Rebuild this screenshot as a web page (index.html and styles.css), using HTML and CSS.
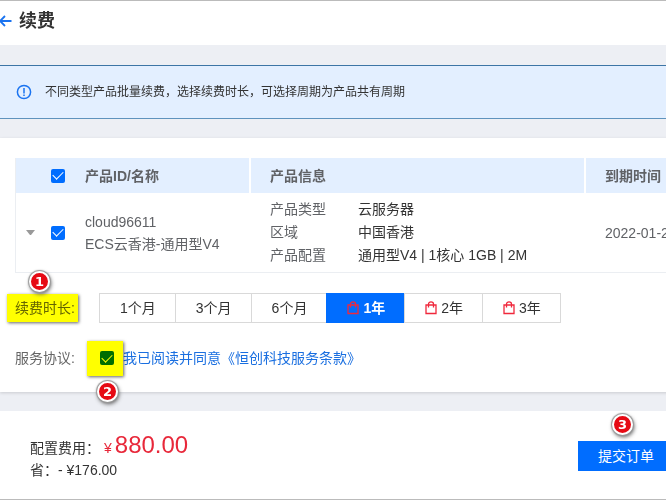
FILE: index.html
```
<!DOCTYPE html>
<html lang="zh-CN">
<head>
    <meta charset="UTF-8">
    <meta name="viewport" content="width=device-width, initial-scale=1">
    <title>续费</title>
    <link rel="stylesheet" href="styles.css">
</head>
<body>
<svg class="sprite" aria-hidden="true">
    <symbol id="bag" viewBox="0 0 12 14">
        <path d="M1 4h10v8.5H1zM3.5 6.5V3a2.5 2.2 0 0 1 5 0v3.5" fill="none" stroke="currentColor" stroke-width="1.3"/>
    </symbol>
</svg>
<div class="page">
    <header class="header">
        <a class="back" href="#" aria-label="返回">
            <svg width="14" height="12" viewBox="0 0 14 12"><path d="M13.5 6H2M7 1L2 6L7 11" fill="none" stroke="currentColor" stroke-width="1.8"/></svg>
        </a>
        <h1>续费</h1>
    </header>

    <div class="notice">
        <svg width="16" height="16" viewBox="0 0 16 16"><circle cx="8" cy="8" r="6.6" fill="none" stroke="currentColor" stroke-width="1.5"/><path d="M8 4v5.5M8 10.5v1.5" stroke="currentColor" stroke-width="1.5"/></svg>
        <span>不同类型产品批量续费，选择续费时长，可选择周期为产品共有周期</span>
    </div>

    <main class="card">
        <table class="products">
            <colgroup>
                <col class="col-name">
                <col class="col-info">
                <col>
            </colgroup>
            <thead>
                <tr>
                    <th>
                        <div class="product">
                            <span class="arrow"></span>
                            <input type="checkbox" aria-label="全选" checked>
                            <span>产品ID/名称</span>
                        </div>
                    </th>
                    <th>产品信息</th>
                    <th>到期时间</th>
                </tr>
            </thead>
            <tbody>
                <tr>
                    <td>
                        <div class="product">
                            <span class="arrow arrow-down"></span>
                            <input type="checkbox" id="cloud96611" checked>
                            <label for="cloud96611">cloud96611<br>ECS云香港-通用型V4</label>
                        </div>
                    </td>
                    <td>
                        <dl class="info">
                            <dt>产品类型</dt><dd>云服务器</dd>
                            <dt>区域</dt><dd>中国香港</dd>
                            <dt>产品配置</dt><dd>通用型V4 | 1核心 1GB | 2M</dd>
                        </dl>
                    </td>
                    <td>2022-01-2</td>
                </tr>
            </tbody>
        </table>

        <div class="row">
            <div class="row-label marked">
                <span id="period">续费时长:</span>
                <span class="mark mark-label"></span>
                <b class="badge badge-top">1</b>
            </div>
            <div class="periods" role="group" aria-labelledby="period">
                <button type="button">1个月</button>
                <button type="button">3个月</button>
                <button type="button">6个月</button>
                <button type="button" class="active"><svg><use href="#bag"/></svg>1年</button>
                <button type="button"><svg><use href="#bag"/></svg>2年</button>
                <button type="button"><svg><use href="#bag"/></svg>3年</button>
            </div>
        </div>

        <div class="row">
            <div class="row-label">服务协议:</div>
            <div class="agree marked">
                <input type="checkbox" id="agree" checked>
                <span class="mark mark-check"></span>
                <b class="badge badge-bottom">2</b>
            </div>
            <label class="terms" for="agree">我已阅读并同意<a href="#">《恒创科技服务条款》</a></label>
        </div>
    </main>

    <footer class="footer">
        <div class="cost">
            <p class="total">配置费用：<span class="yen">¥</span><strong>880.00</strong></p>
            <p>省：- ¥176.00</p>
        </div>
        <div class="submit marked">
            <button type="button">提交订单</button>
            <b class="badge badge-submit">3</b>
        </div>
    </footer>
</div>
</body>
</html>
```

FILE: styles.css
```
* {
  box-sizing: border-box;
}
body {
  margin: 0;
  overflow: hidden;
  background: #edeff4;
  color: #333;
  font: 14px/22px "Liberation Sans", "Noto Sans CJK SC", sans-serif;
}
h1, p, dl, dd {
  margin: 0;
}
a {
  color: #1a6fe0;
  text-decoration: none;
}
button {
  font: inherit;
  color: inherit;
  cursor: pointer;
}
.sprite {
  position: absolute;
  width: 0;
  height: 0;
}

/* the content is a little wider than the window */
.page {
  display: flex;
  flex-direction: column;
  width: calc(100% + 8px);
  min-height: 100vh;
  border-top: 1px solid #bbb;
  border-bottom: 1px solid #bbb;
}

.header {
  display: flex;
  align-items: center;
  gap: 7px;
  height: 44px;
  padding-bottom: 4px;
  margin-left: -2px;
  background: #fff;
}
.back {
  display: flex;
  color: #1a73f0;
}
h1 {
  font-size: 18px;
  line-height: 24px;
}

.notice {
  display: flex;
  align-items: center;
  gap: 13px;
  height: 54px;
  margin: 20px 0 19px;
  padding-left: 16px;
  border-top: 1px solid #3d75a5;
  border-bottom: 1px solid #5f93bd;
  background: #e3efff;
  font-size: 12px;
}
.notice svg {
  color: #1a73f0;
}

.card {
  padding: 20px 0 19px 15px;
  background: #fff;
  box-shadow: 0 1px 3px rgba(0, 0, 0, 0.15);
}

.products {
  width: 100%;
  table-layout: fixed;
  border-collapse: separate;
  border-spacing: 0;
  border-left: 1px solid #ebeef2;
  color: #606266;
}
.col-name {
  width: 233px;
}
.col-info {
  width: 335px;
}
.products th {
  height: 35px;
  padding: 0 0 0 19px;
  border-left: 2px solid #fff;
  background: #e3efff;
  text-align: left;
  white-space: nowrap;
}
.products td {
  height: 80px;
  padding: 0 0 0 21px;
  border-bottom: 1px solid #ebeef2;
  white-space: nowrap;
}
.products th:first-child,
.products td:first-child {
  padding-left: 10px;
  border-left: 0;
}
.product {
  display: flex;
  align-items: center;
}
.arrow {
  width: 9px;
}
.arrow-down {
  border: 4px solid transparent;
  border-top: 5px solid #999;
  border-bottom: 0;
}
.info {
  display: grid;
  grid-template-columns: 88px 1fr;
  line-height: 23px;
}
.info dd {
  color: #333;
}

input[type="checkbox"] {
  appearance: none;
  display: grid;
  place-content: center;
  flex: none;
  width: 14px;
  height: 14px;
  margin: 0;
  border-radius: 2px;
  background: #006dff;
}
input[type="checkbox"]:checked::before {
  content: "";
  width: 9px;
  height: 5px;
  margin-bottom: 3px;
  border: solid #fff;
  border-width: 0 0 1px 1px;
  transform: rotate(-45deg);
}
.product input[type="checkbox"] {
  margin: 0 20px 0 16px;
}

.row {
  display: flex;
  align-items: center;
  height: 30px;
  margin-top: 20px;
  white-space: nowrap;
}
.row-label {
  width: 84px;
  color: #666;
}
.periods {
  display: flex;
}
.periods button {
  display: flex;
  align-items: center;
  gap: 4px;
  height: 30px;
  padding: 0 19px 0 20px;
  border: 1px solid #d9d9d9;
  background: #fff;
}
.periods button + button {
  margin-left: -1px;
}
.periods .active {
  border-color: #006dff;
  background: #006dff;
  color: #fff;
  font-weight: bold;
}
.periods svg {
  width: 12px;
  height: 14px;
  color: #f0283c;
}
.agree {
  display: flex;
  padding: 0 9px 0 1px;
}
.terms {
  color: #1a6fe0;
}

/* highlighter blocks and step numbers */
.marked {
  position: relative;
}
.mark {
  position: absolute;
  background: #ff0;
  box-shadow: 1px 1px 3px #666;
  mix-blend-mode: multiply;
}
.mark-label {
  left: -8px;
  top: -3px;
  width: 71px;
  height: 28px;
}
.mark-check {
  left: -12px;
  top: -10px;
  width: 36px;
  height: 35px;
}
.badge {
  position: absolute;
  width: 21px;
  height: 21px;
  border: 2px solid #fff;
  border-radius: 50%;
  background: #e60a14;
  box-shadow: 0 0 1px 1px #999, 1px 2px 4px #555;
  color: #fff;
  font: bold 13px/17px "DejaVu Sans", sans-serif;
  text-align: center;
}
.badge-top {
  left: 14px;
  bottom: 27px;
}
.badge-bottom {
  left: -2px;
  top: 30px;
}
.badge-submit {
  left: 34px;
  bottom: 36px;
}

.footer {
  display: flex;
  flex: 1;
  align-items: flex-start;
  justify-content: space-between;
  margin-top: 19px;
  padding: 20px 0 0 30px;
  background: #fff;
}
.cost {
  line-height: 16px;
}
.total {
  line-height: 28px;
}
.yen {
  margin: 0 3px 0 4px;
  color: #e8283a;
}
.total strong {
  color: #e8283a;
  font-size: 24px;
  font-weight: normal;
}
.submit {
  margin-top: 10px;
}
.submit button {
  height: 30px;
  padding: 0 20px;
  border: 0;
  background: #006dff;
  color: #fff;
}
```
